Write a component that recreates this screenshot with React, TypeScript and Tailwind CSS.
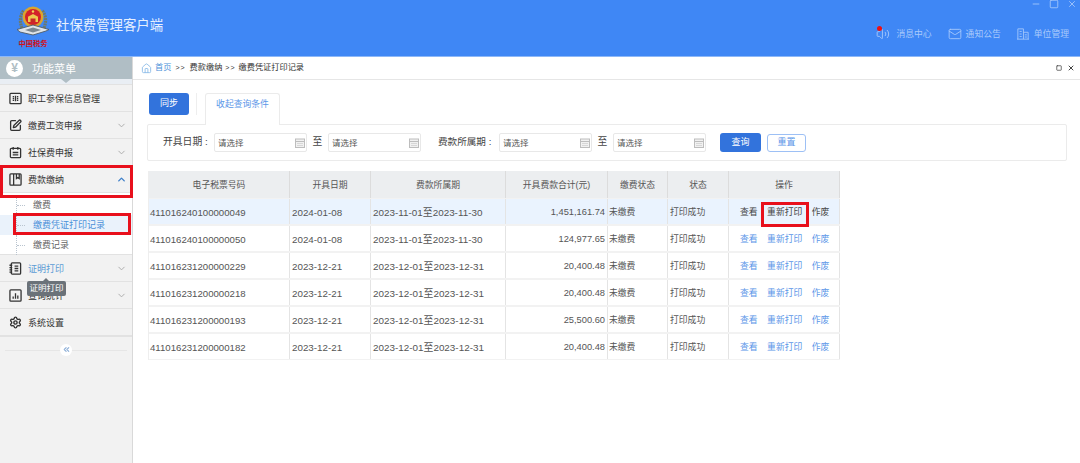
import { ChevronDown, ChevronUp, ChevronsLeft, Settings, SquarePen, Volume2, Mail, Home, Minus, X, Square } from "lucide-react";

const CJK = "font-['Liberation_Sans','Noto_Sans_CJK_SC',sans-serif]";

const rows = [
  { no: "411016240100000049", date: "2024-01-08", period: "2023-11-01至2023-11-30", total: "1,451,161.74", active: true },
  { no: "411016240100000050", date: "2024-01-08", period: "2023-11-01至2023-11-30", total: "124,977.65" },
  { no: "411016231200000229", date: "2023-12-21", period: "2023-12-01至2023-12-31", total: "20,400.48" },
  { no: "411016231200000218", date: "2023-12-21", period: "2023-12-01至2023-12-31", total: "20,400.48" },
  { no: "411016231200000193", date: "2023-12-21", period: "2023-12-01至2023-12-31", total: "25,500.60" },
  { no: "411016231200000182", date: "2023-12-21", period: "2023-12-01至2023-12-31", total: "20,400.48" },
];

const heads = [
  { label: "电子税票号码", w: "w-[141px]" },
  { label: "开具日期", w: "w-[81px]" },
  { label: "费款所属期", w: "w-[135px]" },
  { label: "开具费款合计(元)", w: "w-[102px]" },
  { label: "缴费状态", w: "w-[60px]" },
  { label: "状态", w: "w-[61px]" },
  { label: "操作", w: "w-[111px]" },
];

function Emblem() {
  return (
    <svg viewBox="0 0 34 30" className="w-[34px] h-[30px]">
      {/* laurel */}
      <path d="M6 22 Q2 12 8 4 M28 22 Q32 12 26 4" stroke="#6d7a6a" strokeWidth="3.2" fill="none" strokeDasharray="2 0.7" />
      {/* gold ring and red disc */}
      <circle cx="17" cy="11" r="10.5" fill="#d9a52e" />
      <circle cx="17" cy="11" r="8" fill="#d3212a" />
      <circle cx="17" cy="5.500" r="1.200" fill="#f2d35a" />
      <path d="M11.500 11 L17 8 L22.500 11 Z" fill="#eec84f" />
      <rect x="12" y="11" width="10" height="5" fill="#eec84f" />
      <rect x="14.500" y="12.500" width="5" height="3.500" fill="#c62a28" />
      {/* ribbon */}
      <path d="M1 23.500 L17 19 L33 23.500 L30 25 L17 29 L4 26 Z" fill="#dfe4e8" stroke="#4f5b66" strokeWidth="0.9" />
      <path d="M9 24 L17 21.500 L25 24 L17 26.500 Z" fill="#7b8791" />
    </svg>
  );
}

function IconBox({ kind }: { kind: string }) {
  const c = "w-[13px] h-[13px] text-[#333]";
  if (kind === "staff")
    return (
      <svg viewBox="0 0 14 14" className={c} fill="none" stroke="currentColor" strokeWidth="1.4">
        <rect x="1" y="1.500" width="12" height="11" rx="1" />
        <path d="M7 4v6M4 5h1.500M4 7h1.500M4 9h1.500M8.500 5h1.500M8.500 7h1.500M8.500 9h1.500" />
      </svg>
    );
  if (kind === "pen") return <SquarePen className={c} strokeWidth={2.4} />;
  if (kind === "clip")
    return (
      <svg viewBox="0 0 14 14" className={c} fill="none" stroke="currentColor" strokeWidth="1.4">
        <rect x="1.500" y="2.500" width="11" height="10" rx="1" />
        <path d="M4.500 1v3M9.500 1v3M4 7h6M4 9.500h6" />
      </svg>
    );
  if (kind === "book")
    return (
      <svg viewBox="0 0 14 14" className={c} fill="none" stroke="currentColor" strokeWidth="1.4">
        <rect x="1" y="1" width="12" height="12" rx="1" />
        <path d="M5 1v12M8 1v5l1.500-1 1.500 1V1" />
      </svg>
    );
  if (kind === "note")
    return (
      <svg viewBox="0 0 14 14" className={c} fill="none" stroke="currentColor" strokeWidth="1.4">
        <rect x="2.500" y="1" width="10" height="12" rx="1" />
        <path d="M0.500 3.500h3M0.500 6h3M0.500 8.500h3M0.500 11h3M6 4.500h4M6 7h4M6 9.500h4" />
      </svg>
    );
  if (kind === "chart")
    return (
      <svg viewBox="0 0 14 14" className={c} fill="none" stroke="currentColor" strokeWidth="1.4">
        <rect x="1" y="1" width="12" height="12" rx="1" />
        <path d="M4.500 10.500V8M7 10.500V4.500M9.500 10.500V7" />
      </svg>
    );
  return <Settings className={c} strokeWidth={2.6} />;
}

function MenuRow({ icon, label, arrow, blue }: { icon: string; label: string; arrow?: "down" | "up"; blue?: boolean }) {
  return (
    <div className="h-[27px] flex items-center pl-[9px] pr-[5px] border-b border-[#e2e2e2]">
      <IconBox kind={icon} />
      <span className={`ml-[6px] pt-[3px] text-[9px] flex-1 ${blue ? "text-[#5b9bd5]" : "text-[#333]"}`}>{label}</span>
      {arrow === "down" && <ChevronDown className="w-[11px] h-[11px] text-[#a8a8a8]" />}
      {arrow === "up" && <ChevronUp className="w-[11px] h-[11px] text-[#3d7fc9]" strokeWidth={3} />}
    </div>
  );
}

function SubRow({ label, active }: { label: string; active?: boolean }) {
  return (
    <div className={`h-[20px] flex items-center pl-[16px] ${active ? "bg-[#eaf2fb]" : ""}`}>
      <span className="w-[17px] h-[20px] border-l border-dotted border-[#b9c4cf] flex items-center">
        <span className="w-[8px] border-t border-dotted border-[#b9c4cf]" />
      </span>
      <span className={`pt-[2px] text-[9px] ${active ? "text-[#4a90d9]" : "text-[#666]"}`}>{label}</span>
    </div>
  );
}

function Field() {
  return (
    <div className="w-[93px] h-[19px] border border-[#e8e8e8] rounded-[2px] flex items-center justify-between pl-[3px] pr-[1px] bg-white">
      <span className="pt-[1px] text-[8.5px] text-[#555]">请选择</span>
      <svg viewBox="0 0 10 10" className="w-[10px] h-[10px] text-[#bdbdbd]" fill="none" stroke="currentColor" strokeWidth="1">
        <rect x="0.500" y="1" width="9" height="8.500" fill="#f1f1f1" />
        <path d="M0.500 3.500h9M2.500 5.500h1M4.500 5.500h1M6.500 5.500h1M2.500 7.500h1M4.500 7.500h1M6.500 7.500h1" />
      </svg>
    </div>
  );
}

export default function App() {
  return (
    <div className={`w-[1080px] h-[463px] overflow-hidden flex flex-col bg-white relative ${CJK}`}>
      {/* top bar */}
      <header className="h-[57px] shrink-0 bg-[#3f87f5] border-b border-[#8db8f8] flex items-start relative">
        <div className="ml-[16px] mt-[6px] w-[34px] flex flex-col items-center">
          <Emblem />
          <span className="mt-[3px] text-[7.3px] leading-[10px] text-[#d0121b] font-bold whitespace-nowrap">中国税务</span>
        </div>
        <span className="ml-[6px] mt-[16px] text-[13.4px] text-[#e6f0ff]">社保费管理客户端</span>
        <div className="absolute right-[3px] top-[-1px] flex items-center gap-[8px] text-[#a9cafb]">
          <Minus className="w-[10px] h-[10px]" />
          <Square className="w-[10px] h-[10px]" />
          <X className="w-[10px] h-[10px]" />
        </div>
        <div className="ml-auto mt-[26px] mr-[11px] flex items-center gap-[16px] text-[8.8px] text-[#a9cafb]">
          <span className="flex items-center gap-[6px] relative">
            <Volume2 className="w-[14px] h-[14px]" strokeWidth={1.5} />
            <span className="absolute left-[1px] top-[0px] w-[5px] h-[5px] rounded-full bg-[#ee0f14]" />
            <span className="pt-[2px]">消息中心</span>
          </span>
          <span className="flex items-center gap-[4px]">
            <Mail className="w-[14px] h-[14px]" strokeWidth={1.5} />
            <span className="pt-[2px]">通知公告</span>
          </span>
          <span className="flex items-center gap-[5px]">
            <svg viewBox="0 0 14 14" className="w-[12px] h-[12px]" fill="none" stroke="currentColor" strokeWidth="1">
              <path d="M1 13V1h6.500v12M7.500 5H13v8M0 13h14M3 4h2.500M3 7h2.500M3 10h2.500M9 8h2.500M9 10.500h2.500" />
            </svg>
            <span className="pt-[2px]">单位管理</span>
          </span>
        </div>
      </header>

      <div className="flex flex-1 min-h-0">
        {/* sidebar */}
        <aside className="w-[133px] shrink-0 bg-[#f2f2f2] border-r border-[#d9d9d9] flex flex-col">
          <div className="h-[22px] bg-[#b0bec5] flex items-center pl-[6px] relative">
            <span className="w-[17px] h-[17px] rounded-full bg-white text-[#b0bec5] text-[12px] font-bold flex items-center justify-center">¥</span>
            <span className="ml-[9px] pt-[2px] text-[11px] text-white">功能菜单</span>
            <span className="absolute left-[61px] top-[22px] border-x-[5px] border-x-transparent border-t-[4px] border-t-[#b0bec5] z-10" />
          </div>
          <div className="h-[6px] bg-[#e9eef4] border-b border-[#e2e2e2]" />
          <MenuRow icon="staff" label="职工参保信息管理" />
          <MenuRow icon="pen" label="缴费工资申报" arrow="down" />
          <MenuRow icon="clip" label="社保费申报" arrow="down" />
          <MenuRow icon="book" label="费款缴纳" arrow="up" />
          <div className="bg-white h-[62px] pt-[2px] border-b border-[#e2e2e2]">
            <SubRow label="缴费" />
            <SubRow label="缴费凭证打印记录" active />
            <SubRow label="缴费记录" />
          </div>
          <MenuRow icon="note" label="证明打印" arrow="down" blue />
          <MenuRow icon="chart" label="查询统计" arrow="down" />
          <MenuRow icon="gear" label="系统设置" />
          <div className="h-[26px] flex items-center justify-center relative border-t border-[#e2e2e2]">
            <div className="absolute left-[5px] right-[5px] top-1/2 border-t border-[#e6e6e6]" />
            <span className="relative w-[12px] h-[12px] rounded-full bg-white flex items-center justify-center">
              <ChevronsLeft className="w-[9px] h-[9px] text-[#8fb0d8]" strokeWidth={3} />
            </span>
          </div>
        </aside>

        {/* main */}
        <main className="flex-1 min-w-0 flex flex-col">
          <div className="h-[23px] shrink-0 border-b border-[#e6e6e6] flex items-center pl-[8px] pr-[5px] text-[8.2px] text-[#333]">
            <Home className="w-[11px] h-[11px] text-[#8fbde8]" />
            <span className="ml-[3px] pt-[1px] text-[#4a90d9]">首页</span>
            <span className="mx-[4px] text-[7px] tracking-[1px]">&gt;&gt;</span>
            <span className="pt-[1px]">费款缴纳</span>
            <span className="mx-[3px] text-[7px] tracking-[1px]">&gt;&gt;</span>
            <span className="pt-[1px]">缴费凭证打印记录</span>
            <Square className="ml-auto w-[6px] h-[6px] text-[#444]" strokeWidth={3} />
            <X className="ml-[5px] w-[8px] h-[8px] text-[#444]" strokeWidth={3} />
          </div>

          <div className="pl-[14px] pt-[13px] w-[934px]">
            {/* tabs */}
            <div className="flex h-[32px] ml-[2px]">
              <button className="w-[40px] h-[22px] bg-[#3273dc] text-white text-[9px] rounded-[3px]">同步</button>
              <span className="ml-[7px] mr-[8px] h-[22px] border-l border-[#eee]" />
              <div className="w-[75px] h-[32px] border border-b-0 border-[#ebebeb] rounded-t-[3px] bg-white text-[#5b96e8] text-[8.8px] text-center pt-[4px] relative z-10">
                收起查询条件
              </div>
            </div>
            {/* filter */}
            <div className="-mt-px h-[37px] border border-[#ebebeb] rounded-[2px] flex items-center pl-[15px] text-[#444]">
              <span className="text-[9.8px] w-[51px] whitespace-nowrap">开具日期 :</span>
              <Field />
              <span className="w-[21px] text-center text-[9.8px]">至</span>
              <Field />
              <span className="ml-[17px] w-[61px] text-[9.6px] whitespace-nowrap">费款所属期 :</span>
              <Field />
              <span className="w-[21px] text-center text-[9.8px]">至</span>
              <Field />
              <button className="ml-[14px] w-[41px] h-[19px] bg-[#3273dc] text-white text-[9px] rounded-[3px]">查询</button>
              <button className="ml-[6px] w-[39px] h-[18px] border border-[#9dc0f5] text-[#5b96e8] text-[9px] rounded-[3px]">重置</button>
            </div>
            {/* table */}
            <div className="mt-[10px] w-[692px] ml-px border-l border-[#eeeeee]">
              <div className="flex h-[27px] bg-[#eceef0]">
                {heads.map((h) => (
                  <div key={h.label} className={`${h.w} shrink-0 pt-[3px] flex items-center justify-center text-[8.8px] text-[#555] border-r border-[#dcdcdc]`}>
                    {h.label}
                  </div>
                ))}
              </div>
              {rows.map((r) => (
                <div key={r.no} className={`flex h-[27px] border-b border-t border-[#f2f2f2] text-[#555] ${r.active ? "bg-[#eaf3fe]" : ""}`}>
                  <div className="w-[141px] shrink-0 flex items-center pl-[1px] pt-[3px] text-[9.65px] border-r border-[#e4e4e4]">{r.no}</div>
                  <div className="w-[81px] shrink-0 flex items-center pl-[2px] pt-[3px] text-[9.8px] border-r border-[#e4e4e4]">{r.date}</div>
                  <div className="w-[135px] shrink-0 flex items-center pl-[2px] pt-[3px] text-[9.9px] whitespace-nowrap border-r border-[#e4e4e4]">{r.period}</div>
                  <div className="w-[102px] shrink-0 flex items-center justify-end pr-[2px] pt-[3px] text-[9.3px] border-r border-[#e4e4e4]">{r.total}</div>
                  <div className="w-[60px] shrink-0 flex items-center pl-[1px] pt-[3px] text-[8.8px] border-r border-[#e4e4e4]">未缴费</div>
                  <div className="w-[61px] shrink-0 flex items-center pl-[2px] pt-[3px] text-[8.8px] border-r border-[#e4e4e4]">打印成功</div>
                  <div className={`w-[111px] shrink-0 flex items-center pl-[11px] pt-[3px] gap-[9.5px] text-[8.8px] border-r border-[#e4e4e4] ${r.active ? "text-[#444]" : "text-[#5b96e8]"}`}>
                    <span>查看</span>
                    <span>重新打印</span>
                    <span>作废</span>
                  </div>
                </div>
              ))}
            </div>
          </div>
        </main>
      </div>

      {/* red annotation boxes and tooltip */}
      <div className="absolute left-0 top-[165px] w-[133px] h-[33px] border-[3px] border-[#e8101c]" />
      <div className="absolute left-[13px] top-[213px] w-[118px] h-[22px] border-[3px] border-[#e8101c]" />
      <div className="absolute left-[761px] top-[202px] w-[48px] h-[25px] border-[3px] border-[#e8101c]" />
      <div className="absolute left-[27px] top-[281px] w-[39px] h-[15px] rounded-[2px] bg-[#6b7279] text-white text-[8.5px] flex items-center justify-center">
        证明打印
        <span className="absolute left-[16px] -top-[3px] border-x-[3px] border-x-transparent border-b-[3px] border-b-[#6b7279]" />
      </div>
    </div>
  );
}
